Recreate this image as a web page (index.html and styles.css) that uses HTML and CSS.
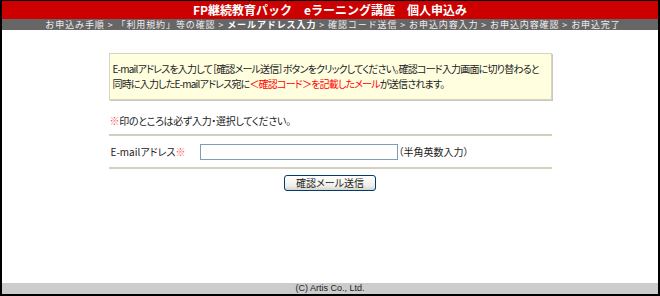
FILE: index.html
```html
<!DOCTYPE html>
<html lang="ja">
<head>
    <meta charset="UTF-8">
    <title>FP継続教育パック eラーニング講座 個人申込み</title>
    <link rel="stylesheet" href="styles.css">
</head>
<body>
<div class="frame">
    <!-- Header -->
    <div class="title">FP継続教育パック　eラーニング講座　個人申込み</div>
    <div class="steps">お申込み手順 &gt; 「利用規約」等の確認 &gt; <b>メールアドレス入力</b> &gt; 確認コード送信 &gt; お申込内容入力 &gt; お申込内容確認 &gt; お申込完了</div>

    <!-- Main -->
    <div class="main">
        <div class="content">
            <div class="notice">
                E-mailアドレスを入力して［確認メール送信］ボタンをクリックしてください。確認コード入力画面に切り替わると<br>
                同時に入力したE-mailアドレス宛に<span class="red">＜確認コード＞を記載したメール</span>が送信されます。
            </div>
            <p class="required"><span class="mark">※</span>印のところは必ず入力・選択してください。</p>
            <div class="form-row">
                <label class="label" for="email">E-mailアドレス<span class="mark">※</span></label>
                <input type="text" id="email" class="field">
                <span class="hint">（半角英数入力）</span>
            </div>
            <div class="buttons">
                <button class="btn">確認メール送信</button>
            </div>
        </div>
    </div>

    <!-- Footer -->
    <div class="footer">(C) Artis Co., Ltd.</div>
</div>
</body>
</html>
```

FILE: styles.css
```css
html, body {
    margin: 0;
    height: 100%;
}
body {
    background: #000;
    padding: 1px 2px 2px 2px;
    box-sizing: border-box;
    font-family: "Noto Sans CJK JP", "Liberation Sans", sans-serif;
    font-size: 10px;
    color: #222;
}
.frame {
    background: #fff;
    height: 100%;
    display: flex;
    flex-direction: column;
}
.title {
    background: #cc0000;
    color: #fff;
    font-weight: bold;
    font-size: 12px;
    height: 18px;
    line-height: 18px;
    text-align: center;
}
.steps {
    background: #666;
    color: #eee;
    height: 11px;
    line-height: 11px;
    text-align: center;
    font-size: 9px;
    letter-spacing: 0.9px;
    white-space: nowrap;
    padding-left: 6px;
}
.steps b {
    color: #fff;
}
.main {
    flex-grow: 1;
}
.content {
    width: 443px;
    margin: 23px auto 0;
}
.notice {
    background: #ffffe0;
    border: 1px solid #d8d4c0;
    box-shadow: 1px 1px 0 #c8c8c8;
    padding: 7px 2px 8px 3px;
    line-height: 15px;
    font-feature-settings: "palt";
    letter-spacing: -0.8px;
    white-space: nowrap;
}
.red {
    color: #ff0000;
}
.mark {
    color: #ff5050;
}
.required {
    margin: 13px 0 0 0;
    line-height: 15px;
    padding-left: 1px;
    font-feature-settings: "palt";
    letter-spacing: -0.3px;
    border-bottom: 2px solid #d4d0c0;
    padding-bottom: 6px;
}
.form-row {
    display: flex;
    align-items: center;
    height: 31px;
    border-bottom: 2px solid #d4d0c0;
    font-feature-settings: "palt";
}
.label {
    width: 89px;
    padding-left: 2px;
}
.field {
    width: 198px;
    height: 16px;
    box-sizing: border-box;
    border: 1px solid #7f9db9;
    padding: 0 2px;
    margin: 0;
    font-size: 10px;
}
.hint {
    margin-left: 1px;
}
.buttons {
    text-align: center;
    margin-top: 6px;
}
.btn {
    width: 92px;
    height: 16px;
    padding: 0;
    font-family: "Noto Sans CJK JP", sans-serif;
    font-size: 10px;
    line-height: 12px;
    color: #222;
    border: 1px solid #003c74;
    border-radius: 3px;
    background: linear-gradient(#ffffff, #f0f0ea 70%, #d8d4c8);
    font-feature-settings: "palt";
}
.footer {
    background: #ccc;
    height: 11px;
    line-height: 11px;
    text-align: center;
    color: #222;
    font-family: "Liberation Sans", sans-serif;
    font-size: 9px;
}
```
